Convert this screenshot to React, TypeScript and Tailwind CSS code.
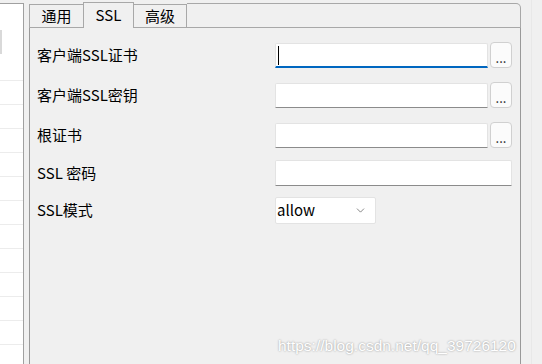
import { ChevronDown } from 'lucide-react';

const FONT = 'font-["Noto_Sans_CJK_SC","Noto_Sans",sans-serif]';

function Browse() {
  return (
    <button className="ml-[2px] flex h-[26px] w-[22px] shrink-0 items-end justify-center rounded-[4px] border border-[#d0d0d0] bg-[#fbfbfb] pb-[3px] text-[13px] leading-none text-[#1a1a1a]">
      ...
    </button>
  );
}

function TextBox({ width, focused }: { width: string; focused?: boolean }) {
  return (
    <div
      className={`relative h-[25px] ${width} rounded-t-[2px] border border-[#e3e3e3] bg-white ${
        focused ? 'border-b-2 border-b-[#0067c0]' : 'border-b-[#8b8b8b]'
      }`}
    >
      {focused && <span className="absolute left-[2px] top-[2px] h-[19px] w-px bg-black" />}
    </div>
  );
}

function Row({
  label,
  className,
  children,
}: {
  label: string;
  className: string;
  children: React.ReactNode;
}) {
  return (
    <div className={`flex h-[28px] items-center ${className}`}>
      <span className="w-[238px] shrink-0 text-[15px] text-black">{label}</span>
      {children}
    </div>
  );
}

export default function App() {
  const gridRows = Array.from({ length: 13 });

  return (
    <div className={`relative flex h-[364px] w-[542px] overflow-hidden bg-[#f0f0f0] ${FONT}`}>
      {/* left list pane */}
      <div className="flex w-[24px] shrink-0 flex-col pt-[3px]">
        <div className="flex-1 border-t border-r border-[#a0a0a0] bg-white">
          <div className="h-[51px] border-b border-[#ececec]">
            <div className="mt-[26px] h-[24px] w-[2px] bg-[#d9d9d9]" />
          </div>
          {gridRows.map((_, i) => (
            <div key={i} className="h-[24px] border-b border-[#ececec]" />
          ))}
        </div>
      </div>

      {/* tab widget */}
      <div className="ml-[5px] flex w-[492px] shrink-0 flex-col">
        <div className="flex h-[28px] items-end text-[15px] text-black">
          <div className="flex h-[24px] w-[54px] items-center justify-center border-t border-b border-l border-[#a8a8a8] bg-[#f0f0f0]">
            通用
          </div>
          <div className="flex h-[26px] w-[51px] items-center justify-center border-t border-r border-l border-[#a8a8a8] bg-[#f0f0f0]">
            SSL
          </div>
          <div className="flex h-[24px] w-[53px] items-center justify-center border-t border-r border-b border-[#a8a8a8] bg-[#f0f0f0]">
            高级
          </div>
          <div className="h-[25px] flex-1 rounded-tr-[5px] border-t border-r border-b border-[#a8a8a8]" />
        </div>

        <div className="flex-1 border-r border-l border-[#999] pt-[13px] pl-[7px]">
          <Row label="客户端SSL证书" className="">
            <TextBox width="w-[213px]" focused />
            <Browse />
          </Row>
          <Row label="客户端SSL密钥" className="mt-[12px]">
            <TextBox width="w-[213px]" />
            <Browse />
          </Row>
          <Row label="根证书" className="mt-[12px]">
            <TextBox width="w-[213px]" />
            <Browse />
          </Row>
          <Row label="SSL 密码" className="mt-[10px]">
            <div className="h-[26px] w-[237px] rounded-t-[2px] border border-[#e3e3e3] border-b-[#8b8b8b] bg-white" />
          </Row>
          <Row label="SSL模式" className="mt-[9px]">
            <div className="flex h-[27px] w-[101px] items-center justify-between rounded-[2px] border border-[#e3e3e3] bg-white pr-[8px] pl-[1px]">
              <span className="text-[15px] text-black">allow</span>
              <ChevronDown size={13} strokeWidth={1.3} className="text-[#555]" />
            </div>
          </Row>
        </div>
      </div>

      {/* right strip */}
      <div className="flex flex-1 justify-center">
        <div className="w-px bg-[#e8e8e8]" />
      </div>

      {/* watermark */}
      <span className='pointer-events-none absolute top-[334px] left-[278px] font-["Liberation_Sans",sans-serif] text-[15.5px] text-white [text-shadow:0_0_2px_#8a8a8a]'>
        https://blog.csdn.net/qq_39726120
      </span>
    </div>
  );
}
